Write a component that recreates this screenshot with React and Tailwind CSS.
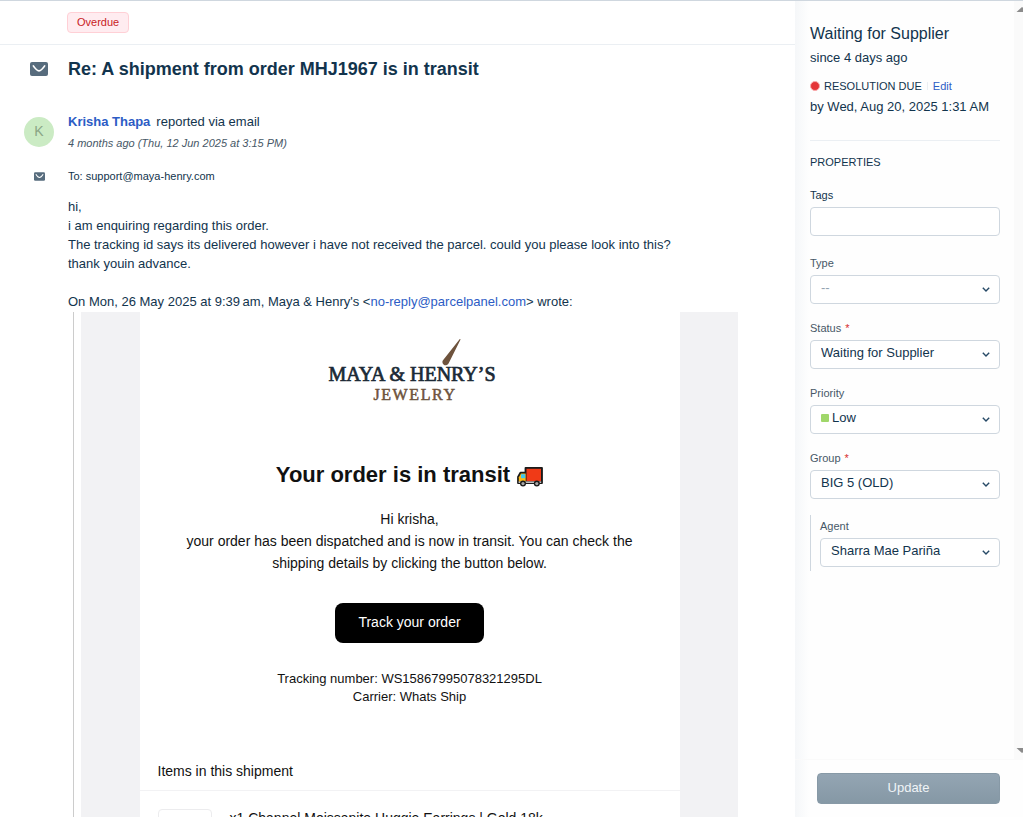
import React, { useState } from "react";

const MailIcon = ({ className }) => (
  <svg viewBox="0 0 18 14" className={className} aria-hidden="true">
    <rect width="18" height="14" rx="2" fill="#576c7d" />
    <path
      d="M3 3.4c2.2 3.4 4 5.4 6 5.4s3.800-2 6-5.400"
      fill="none"
      stroke="#fff"
      strokeWidth="1.7"
    />
  </svg>
);

const Truck = () => (
  <svg viewBox="0 0 26 20" className="w-[26px] h-5" aria-hidden="true">
    <path
      d="M8.500 1h16.500v15H1v-6l2.400-4.400h5.100z"
      fill="#1b1b1b"
      stroke="#1b1b1b"
      strokeWidth="1.8"
      strokeLinejoin="round"
    />
    <rect x="9.500" y="1.800" width="14.500" height="12.400" fill="#f03a17" />
    <path d="M1.800 10.200 4 6.400h4.700v8.400H1.800z" fill="#fcb813" />
    <path d="M4 7.200h4.200v4H4z" fill="#3fc5ef" />
    <rect x="1.600" y="14.400" width="22.600" height="1.600" fill="#bdbdbd" />
    <circle cx="6" cy="16.600" r="3" fill="#1b1b1b" />
    <circle cx="6" cy="16.600" r="1.600" fill="#a9a9a9" />
    <circle cx="19.800" cy="16.600" r="3" fill="#1b1b1b" />
    <circle cx="19.800" cy="16.600" r="1.600" fill="#a9a9a9" />
  </svg>
);

const Logo = () => (
  <svg
    viewBox="0 0 170 70"
    className="w-[170px] h-[70px]"
    role="img"
    aria-label="Maya & Henry's Jewelry"
  >
    <path
      d="M132.400 2.400c.8-.8 1.300-.3.900.6L121.800 26a3.300 3.300 0 1 1-5.200-3.600z"
      fill="#6e533d"
    />
    <text
      x="85"
      y="44"
      textAnchor="middle"
      fontFamily="Liberation Serif, serif"
      fontSize="20"
      fill="#1b2a36"
      stroke="#1b2a36"
      strokeWidth="0.7"
    >
      MAYA &amp; HENRY’S
    </text>
    <text
      x="88"
      y="63"
      textAnchor="middle"
      className="tracking-widest"
      fontFamily="Liberation Serif, serif"
      fontSize="16"
      fill="#6e533d"
      stroke="#6e533d"
      strokeWidth="0.5"
    >
      JEWELRY
    </text>
  </svg>
);

const SelectField = ({ id, label, required, options, swatch, muted }) => {
  const [value, setValue] = useState(options[0]);

  return (
    <div>
      <label htmlFor={id} className="block text-[11px] leading-4 text-[#475867]">
        {label}
        {required && <span className="ml-1 text-[#d72d30]">*</span>}
      </label>
      <div className="mt-1 grid items-center">
        <select
          id={id}
          value={value}
          onChange={(e) => setValue(e.target.value)}
          className={`col-start-1 row-start-1 w-full h-[29px] appearance-none rounded-[4px] border border-[#cfd7df] bg-white pr-8 pb-1 text-[13px] leading-5 ${
            swatch ? "pl-[21px]" : "pl-[10px]"
          } ${muted ? "text-[#92a2b1]" : "text-[#12344d]"}`}
        >
          {options.map((option) => (
            <option key={option}>{option}</option>
          ))}
        </select>
        {swatch && (
          <span className="col-start-1 row-start-1 ml-[11px] mb-1 size-2 rounded-[1px] bg-[#a0d76a] pointer-events-none" />
        )}
        <svg
          viewBox="0 0 8 5"
          className="col-start-1 row-start-1 justify-self-end mr-[10px] w-2 h-[5px] pointer-events-none"
          aria-hidden="true"
        >
          <path
            d="M.8.7 4 3.900 7.200.7"
            fill="none"
            stroke="#264966"
            strokeWidth="1.4"
          />
        </svg>
      </div>
    </div>
  );
};

const Conversation = () => (
  <main className="flex-1 min-w-0 overflow-hidden">
    <div className="h-11 border-b border-[#ebeff3] pl-[67px] flex items-center">
      <span className="rounded-[4px] border border-[#ffd0d6] bg-[#ffecf0] px-[9px] text-[11px] leading-[19px] text-[#c82124]">
        Overdue
      </span>
    </div>

    <div className="mt-3 flex items-center gap-[14px] pl-6">
      <div className="w-[30px] flex justify-center">
        <MailIcon className="w-[18px] h-[14px]" />
      </div>
      <h1 className="text-[18px] leading-6 font-bold text-[#12344d]">
        Re: A shipment from order MHJ1967 is in transit
      </h1>
    </div>

    <div className="mt-[31px] flex items-center gap-[14px] pl-6">
      <div className="size-[30px] rounded-full bg-[#cbebc4] text-[14px] text-[#8aa585] flex items-center justify-center">
        K
      </div>
      <div>
        <p className="text-[13px] leading-5 text-[#12344d]">
          <a href="#contact" className="mr-[6px] font-bold text-[#2c5cc5]">
            Krisha Thapa
          </a>
          reported via email
        </p>
        <p className="mt-[3px] text-[11px] leading-4 italic text-[#475867]">
          4 months ago (Thu, 12 Jun 2025 at 3:15 PM)
        </p>
      </div>
    </div>

    <div className="mt-[17px] flex items-center gap-[14px] pl-6">
      <div className="w-[30px] flex justify-center">
        <MailIcon className="w-[11px] h-[9px]" />
      </div>
      <p className="text-[11px] leading-4 text-[#12344d]">
        To: support@maya-henry.com
      </p>
    </div>

    <div className="mt-[13px] pl-[68px] pr-[57px] text-[13px] leading-[19px] text-[#12344d]">
      <p>hi,</p>
      <p>i am enquiring regarding this order.</p>
      <p>
        The tracking id says its delivered however i have not received the
        parcel. could you please look into this?
      </p>
      <p>thank youin advance.</p>
      <p className="mt-[19px]">
        On Mon, 26 May 2025 at 9:39{"\u202f"}am, Maya &amp; Henry's &lt;
        <a href="mailto:no-reply@parcelpanel.com" className="text-[#2c5cc5]">
          no-reply@parcelpanel.com
        </a>
        &gt; wrote:
      </p>

      <blockquote className="mt-px ml-[5px] border-l border-[#cccccc] pl-[7px]">
        <div className="bg-[#f2f2f4] flex justify-center">
          <div className="w-full max-w-[540px] bg-white text-center text-[14px] leading-[22px] text-[#111111]">
            <div className="pt-[25px] pl-1 flex justify-center">
              <Logo />
            </div>
            <h2 className="mt-[54px] flex items-center justify-center gap-[7px] text-[22px] leading-7 font-bold">
              Your order is in transit
              <span className="pt-1">
                <Truck />
              </span>
            </h2>
            <p className="mt-[19px] px-9">
              Hi krisha,
              <br />
              your order has been dispatched and is now in transit. You can
              check the shipping details by clicking the button below.
            </p>
            <button
              type="button"
              className="mt-[29px] h-10 rounded-[8px] bg-black px-[23px] pb-0.5 text-white"
            >
              Track your order
            </button>
            <p className="mt-[27px] text-[13px] leading-[18px]">
              Tracking number: WS15867995078321295DL
              <br />
              Carrier: Whats Ship
            </p>
            <h3 className="mt-[54px] border-b border-[#f2f2f4] px-[18px] pb-2 text-left">
              Items in this shipment
            </h3>
            <div className="flex gap-[18px] px-[18px] pt-[18px] text-left">
              <div className="size-[54px] shrink-0 rounded-[4px] border border-[#ececee]" />
              <p className="leading-[18px]">
                x1 Channel Moissanite Huggie Earrings | Gold 18k
              </p>
            </div>
          </div>
        </div>
      </blockquote>
    </div>
  </main>
);

const Sidebar = () => {
  const [tags, setTags] = useState("");

  return (
    <aside className="w-[228px] shrink-0 flex flex-col bg-linear-to-r from-[#f5f7f9] to-[#fefefe] to-[14px] text-[#12344d]">
      <div className="flex-1 min-h-0 flex">
        <div className="flex-1 pl-[15px] pr-[14px] pt-[23px]">
          <h2 className="text-[16px] leading-5">Waiting for Supplier</h2>
          <p className="mt-1 text-[13px] leading-5">since 4 days ago</p>
          <div className="mt-[10px] flex items-center text-[11px] leading-4">
            <span className="mr-1 size-[10px] rounded-full border border-[#f9a9ab] bg-[#e43538]" />
            RESOLUTION DUE
            <span className="mx-[5px] h-2 w-px bg-[#ebeff3]" />
            <a href="#edit" className="text-[#2c5cc5]">
              Edit
            </a>
          </div>
          <p className="mt-[3px] text-[13px] leading-5">
            by Wed, Aug 20, 2025 1:31 AM
          </p>

          <hr className="mt-[23px] border-[#ebeff3]" />

          <h3 className="mt-[13px] text-[11px] leading-4">PROPERTIES</h3>

          <div className="mt-[17px]">
            <label htmlFor="tags" className="block text-[11px] leading-4">
              Tags
            </label>
            <input
              id="tags"
              type="text"
              value={tags}
              onChange={(e) => setTags(e.target.value)}
              className="mt-1 block w-full h-[29px] rounded-[4px] border border-[#cfd7df] bg-white px-2 text-[13px]"
            />
          </div>

          <div className="mt-[19px] flex flex-col gap-4">
            <SelectField id="type" label="Type" options={["--"]} muted />
            <SelectField
              id="status"
              label="Status"
              options={["Waiting for Supplier"]}
              required
            />
            <SelectField
              id="priority"
              label="Priority"
              options={["Low"]}
              swatch
            />
            <SelectField
              id="group"
              label="Group"
              options={["BIG 5 (OLD)"]}
              required
            />
            <div className="border-l border-[#cfd7df] pl-[9px] pt-[3px] pb-1">
              <SelectField
                id="agent"
                label="Agent"
                options={["Sharra Mae Pariña"]}
              />
            </div>
          </div>
        </div>

        {/* scroll track */}
        <div className="w-[9px] flex flex-col justify-between overflow-hidden bg-[#fafafa] pt-[6px] pb-[6px]">
          <svg viewBox="0 0 9 5" className="w-[9px] h-[5px]" aria-hidden="true">
            <path d="M2.500 5 8 0l1 .8V5z" fill="#8b8b8b" />
          </svg>
          <svg viewBox="0 0 9 5" className="w-[9px] h-[5px]" aria-hidden="true">
            <path d="M2.500 0 8 5l1-.8V0z" fill="#8b8b8b" />
          </svg>
        </div>
      </div>

      <div className="border-t border-[#fafafa] pl-[22px] pr-[23px] pt-[13px] pb-[13px]">
        <button
          type="button"
          className="w-full h-[31px] rounded-[4px] border border-[#8799a6] bg-linear-to-b from-[#94a5b3] to-[#8598a5] pb-0.5 text-[13px] font-medium text-[#f0f4f7]"
        >
          Update
        </button>
      </div>
    </aside>
  );
};

const App = () => {
  return (
    <div className="flex h-screen overflow-hidden border-t border-[#cfd7df] bg-white font-['Liberation_Sans',Arial,sans-serif]">
      <Conversation />
      <Sidebar />
    </div>
  );
};

export default App;
